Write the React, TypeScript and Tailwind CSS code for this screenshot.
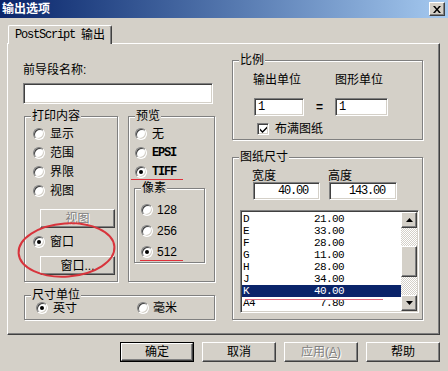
import React from 'react';

const sunken =
  'border border-t-[#808080] border-l-[#808080] border-b-white border-r-white bg-white shadow-[inset_1px_1px_0_#404040,inset_-1px_-1px_0_#d4d0c8]';
const raised =
  'border border-t-white border-l-white border-b-[#404040] border-r-[#404040] bg-[#d4d0c8] shadow-[inset_-1px_-1px_0_#808080]';
const mono = "[font-family:'Liberation_Mono',monospace] tracking-[-1.2px]";
const checker = '[background:repeating-conic-gradient(#fff_0_25%,#d4d0c8_0_50%)_0_0/2px_2px]';

function Radio({ checked = false }: { checked?: boolean }) {
  return (
    <span className={`flex h-[12px] w-[12px] shrink-0 items-center justify-center rounded-full ${sunken}`}>
      {checked && <span className="h-[4px] w-[4px] rounded-full bg-black" />}
    </span>
  );
}

function Group({ label, className = '', children }: { label: string; className?: string; children?: React.ReactNode }) {
  return (
    <div className={`relative shrink-0 border border-[#808080] shadow-[inset_1px_1px_0_#fff,1px_1px_0_#fff] ${className}`}>
      <span className="absolute -top-[8px] left-[6px] bg-[#d4d0c8] px-[1px] leading-[14px]">{label}</span>
      {children}
    </div>
  );
}

function Btn({ children, disabled, className = '' }: { children: React.ReactNode; disabled?: boolean; className?: string }) {
  return (
    <div
      className={`flex shrink-0 items-center justify-center ${raised} ${
        disabled ? 'text-[#808080] [text-shadow:1px_1px_0_#fff]' : ''
      } ${className}`}
    >
      {children}
    </div>
  );
}

function Arrow({ down }: { down?: boolean }) {
  return (
    <svg width="7" height="4" viewBox="0 0 7 4">
      <path d={down ? 'M0 0h7L3.5 4z' : 'M0 4h7L3.5 0z'} fill="#000" />
    </svg>
  );
}

const rows = [
  ['D', '21.00'],
  ['E', '33.00'],
  ['F', '28.00'],
  ['G', '11.00'],
  ['H', '28.00'],
  ['J', '34.00'],
  ['K', '40.00'],
  ['A4', '7.80'],
];

function PaperList() {
  return (
    <div className={`ml-[7px] mt-[10px] flex h-[103px] w-[179px] p-[1px] ${sunken}`}>
      <div className="flex flex-1 flex-col pt-[1px] text-[11px] leading-[12px] tracking-[-0.6px] [font-family:'Liberation_Mono',monospace]">
        {rows.map(([k, v]) => (
          <div key={k} className={`flex h-[12px] items-center ${k === 'K' ? 'bg-[#0a246a] text-white' : ''}`}>
            <div className="flex w-[102px] justify-between pl-[1px]">
              <span>{k}</span>
              <span>{v}</span>
            </div>
          </div>
        ))}
      </div>
      <div className="flex w-[16px] flex-col">
        <Btn className="h-[16px]">
          <Arrow />
        </Btn>
        <div className={`h-[18px] ${checker}`} />
        <div className={`h-[31px] ${raised}`} />
        <div className={`h-[18px] ${checker}`} />
        <Btn className="h-[16px]">
          <Arrow down />
        </Btn>
      </div>
    </div>
  );
}

export default function App() {
  return (
    <div className="relative flex h-[371px] w-[448px] flex-col overflow-hidden bg-[#d4d0c8] text-[12px] leading-[14px] text-black [font-family:'Liberation_Sans','Noto_Sans_CJK_SC',sans-serif]">
      <div className="flex h-[18px] shrink-0 items-center justify-between bg-linear-to-r from-[#0a246a] to-[#a6caf0] pl-[2px] pr-[3px]">
        <span className="font-bold text-white">输出选项</span>
        <Btn className="h-[14px] w-[16px]">
          <svg width="8" height="7" viewBox="0 0 8 7">
            <path d="M0 0h2l2 2.5L6 0h2L5 3.5 8 7H6L4 4.5 2 7H0l3-3.5z" fill="#000" />
          </svg>
        </Btn>
      </div>

      <div className="flex px-[7px] pt-[7px]">
        <div className="relative z-10 -mb-px ml-px flex h-[19px] w-[104px] items-center justify-center rounded-t-[2px] border-t border-l border-r border-t-white border-l-white border-r-[#404040] bg-[#d4d0c8] shadow-[inset_-1px_0_0_#808080]">
          <span className={mono}>PostScript</span>
          <span className="ml-[6px]">输出</span>
        </div>
      </div>

      <div className="mx-[7px] flex h-[292px] w-[433px] shrink-0 border border-t-white border-l-white border-b-[#404040] border-r-[#404040] shadow-[inset_-1px_-1px_0_#808080]">
        <div className="ml-[15px] flex w-[192px] flex-col pt-[19px]">
          <span>前导段名称:</span>
          <div className={`mt-[6px] h-[21px] w-[190px] ${sunken}`} />

          <div className="ml-px mt-[12px] flex gap-[10px]">
            <Group label="打印内容" className="h-[166px] w-[94px]">
              <div className="flex flex-col pl-[8px] pt-[7px]">
                {['显示', '范围', '界限', '视图'].map((t) => (
                  <div key={t} className="flex h-[19px] items-center gap-[5px]">
                    <Radio />
                    {t}
                  </div>
                ))}
                <Btn disabled className="ml-[7px] mt-[9px] h-[19px] w-[75px]">
                  视图
                </Btn>
                <div className="mt-[4px] flex h-[19px] items-center gap-[5px]">
                  <Radio checked />
                  窗口
                </div>
                <Btn className="ml-[7px] mt-[5px] h-[19px] w-[75px]">窗口...</Btn>
              </div>
            </Group>

            <Group label="预览" className="h-[166px] w-[87px]">
              <div className="flex flex-col pt-[7px]">
                <div className="flex h-[19px] items-center gap-[5px] pl-[6px]">
                  <Radio />无
                </div>
                <div className="flex h-[19px] items-center gap-[5px] pl-[6px]">
                  <Radio />
                  <span className={`font-bold ${mono}`}>EPSI</span>
                </div>
                <div className="flex h-[19px] items-center gap-[5px] pl-[6px]">
                  <Radio checked />
                  <span className={`font-bold ${mono}`}>TIFF</span>
                </div>
                <Group label="像素" className="ml-[5px] mt-[7px] h-[75px] w-[71px]">
                  <div className="flex flex-col pl-[6px] pt-[10px]">
                    {['128', '256', '512'].map((t) => (
                      <div key={t} className="flex h-[21px] items-center gap-[4px]">
                        <Radio checked={t === '512'} />
                        {t}
                      </div>
                    ))}
                  </div>
                </Group>
              </div>
            </Group>
          </div>

          <Group label="尺寸单位" className="ml-px mt-[13px] h-[25px] w-[191px]">
            <div className="flex pl-[11px] pt-[2px]">
              <div className="flex h-[19px] w-[101px] items-center gap-[5px]">
                <Radio checked />
                英寸
              </div>
              <div className="flex h-[19px] items-center gap-[4px]">
                <Radio />
                毫米
              </div>
            </div>
          </Group>
        </div>

        <div className="ml-[17px] flex w-[191px] flex-col pt-[16px]">
          <Group label="比例" className="h-[80px] w-[191px]">
            <div className="flex pl-[20px] pt-[12px]">
              <span className="w-[82px]">输出单位</span>
              <span>图形单位</span>
            </div>
            <div className="mt-[11px] flex items-center pl-[21px]">
              <div className={`flex h-[18px] w-[50px] items-center pl-[3px] ${sunken} ${mono}`}>1</div>
              <span className="w-[31px] text-center font-bold">=</span>
              <div className={`flex h-[18px] w-[53px] items-center pl-[3px] ${sunken} ${mono}`}>1</div>
            </div>
            <div className="mt-[6px] flex items-center gap-[6px] pl-[24px]">
              <span className={`flex h-[12px] w-[12px] items-center justify-center ${sunken}`}>
                <svg width="7" height="7" viewBox="0 0 7 7">
                  <path d="M0 2.5L2.5 5 7 0.5v2L2.5 7 0 4.5z" fill="#000" />
                </svg>
              </span>
              布满图纸
            </div>
          </Group>

          <Group label="图纸尺寸" className="mt-[17px] h-[163px] w-[191px]">
            <div className="flex pl-[19px] pt-[12px] leading-[12px]">
              <span className="w-[76px]">宽度</span>
              <span>高度</span>
            </div>
            <div className="flex gap-[9px] pl-[20px]">
              <div className={`flex h-[18px] w-[67px] items-center justify-end pr-[11px] ${sunken} ${mono}`}>40.00</div>
              <div className={`flex h-[18px] w-[68px] items-center justify-end pr-[11px] ${sunken} ${mono}`}>143.00</div>
            </div>
            <PaperList />
          </Group>
        </div>
      </div>

      <div className="mt-[7px] flex justify-end gap-[8px] pr-[8px]">
        <div className="h-[20px] w-[74px] border border-black">
          <Btn className="h-full w-full">确定</Btn>
        </div>
        <Btn className="h-[20px] w-[74px]">取消</Btn>
        <Btn disabled className="h-[20px] w-[74px]">
          应用(<u>A</u>)
        </Btn>
        <Btn className="h-[20px] w-[74px]">帮助</Btn>
      </div>

      <svg className="pointer-events-none absolute left-0 top-0" width="448" height="371">
        <ellipse cx="66.5" cy="250" rx="48" ry="26.5" transform="rotate(-4 66.5 250)" fill="none" stroke="#d8343c" strokeWidth="2" />
        <line x1="131" y1="179.5" x2="183" y2="179.5" stroke="#e0303a" />
        <line x1="140" y1="260.5" x2="183" y2="260.5" stroke="#e0303a" />
        <line x1="245" y1="299.5" x2="383" y2="299.5" stroke="#e06a80" />
      </svg>
    </div>
  );
}
